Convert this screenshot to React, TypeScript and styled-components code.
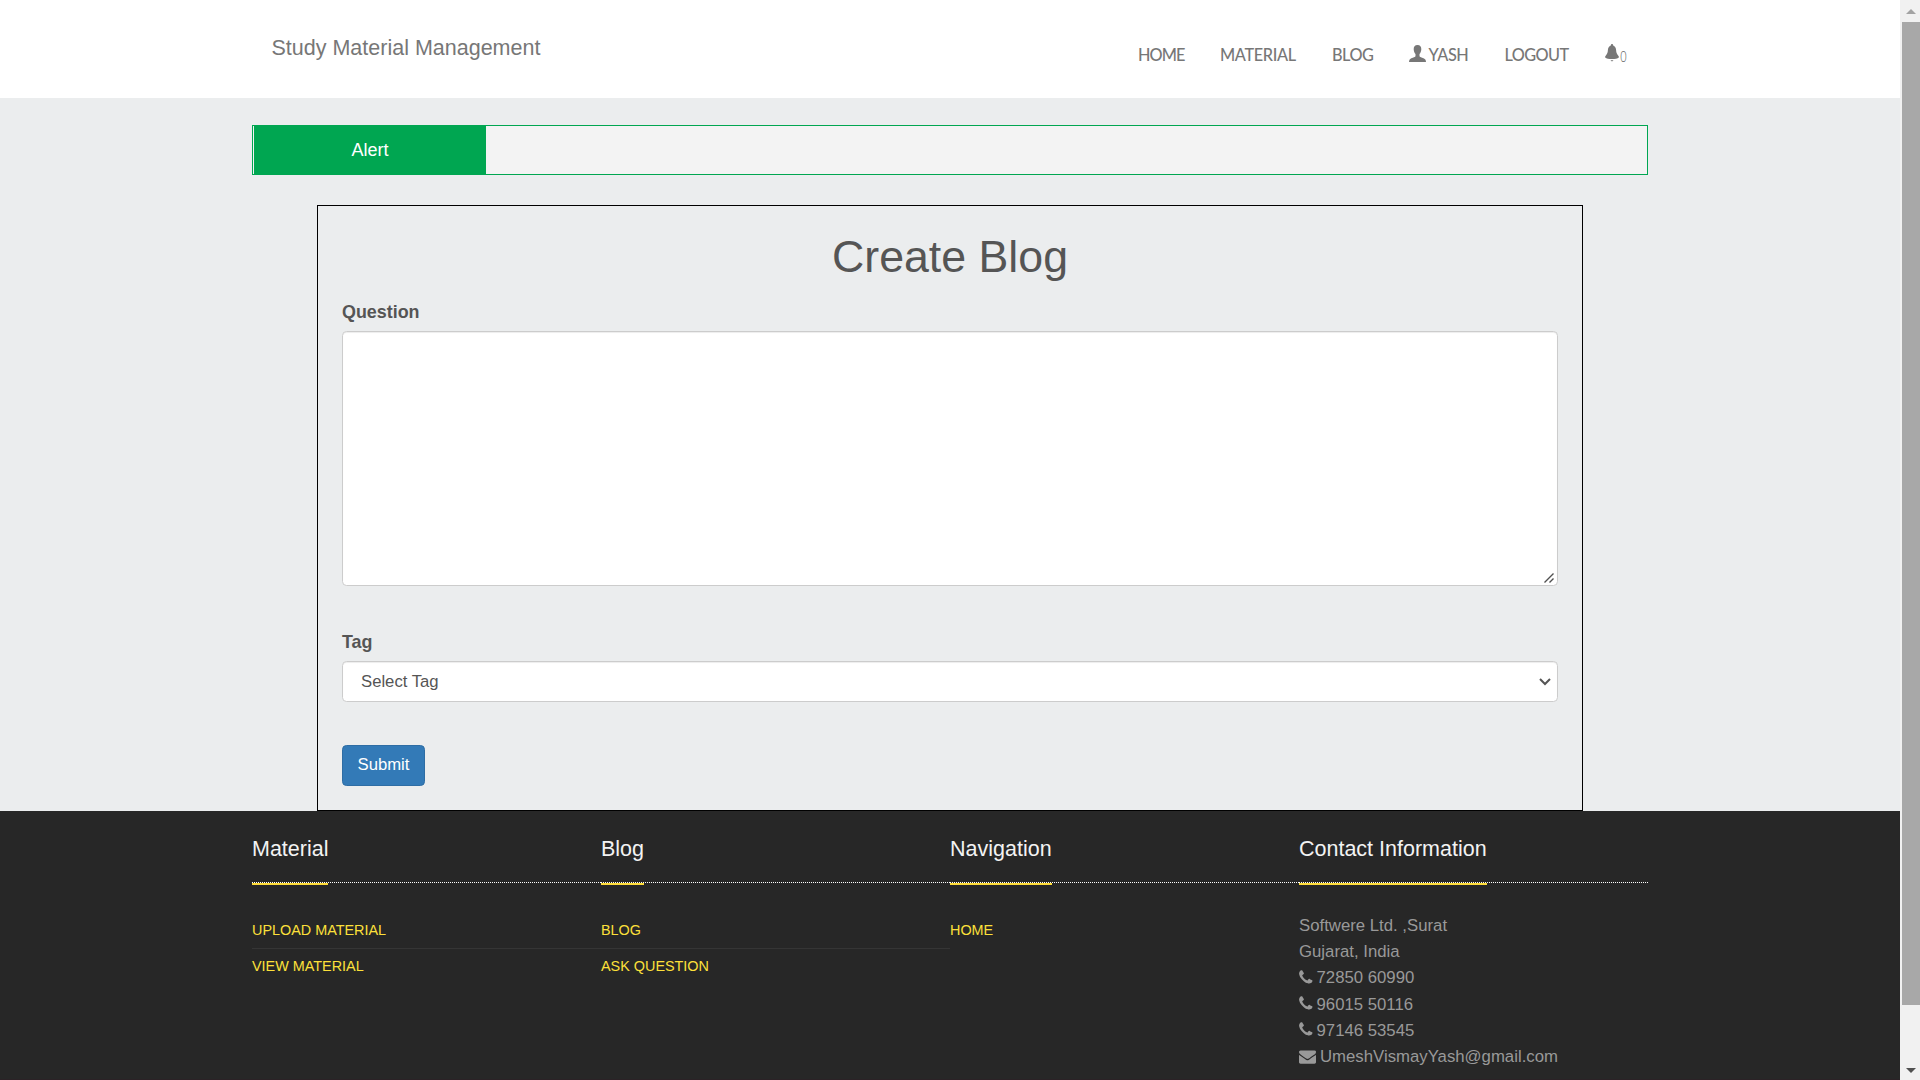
import React from 'react';
import styled, { createGlobalStyle } from 'styled-components';

const Global = createGlobalStyle`
  *, *::before, *::after { box-sizing: border-box; }
  html, body { margin: 0; padding: 0; overflow: hidden; }
  body { font-family: "Liberation Sans", Arial, sans-serif; color: #555; background: #ebedee; }
`;

const Window = styled.div`
  display: flex;
  width: 1920px;
  height: 1080px;
  overflow: hidden;
`;
const Page = styled.div`
  width: 1900px;
  height: 1080px;
  display: flex;
  flex-direction: column;
  background: #ebedee;
  overflow: hidden;
`;
const Header = styled.header`
  flex: none;
  height: 98px;
  padding: 0 272px 0 271.5px;
  background: #fff;
  display: flex;
  justify-content: space-between;
`;
const Brand = styled.a`
  margin-top: 36px;
  font-size: 21.5px;
  line-height: 24px;
  color: #777;
  white-space: nowrap;
`;
const Nav = styled.nav`
  display: flex;
  margin-top: 45px;
  height: 20px;
  gap: 35.5px;
`;
const NavItem = styled.a<{ $w: number; $spacing?: number }>`
  width: ${p => p.$w}px;
  display: flex;
  align-items: center;
  font: 500 16.3px/20px Lato, sans-serif;
  letter-spacing: ${p => p.$spacing ?? 0}px;
  color: #777;
  white-space: nowrap;
  svg { flex: none; fill: #777; }
`;
const UserIcon = styled.svg`
  margin: 0 2.5px 3px 0;
`;
const BellIcon = styled.svg`
  margin-bottom: 4px;
`;
const Count = styled.span`
  font: 300 15px/20px "Open Sans", sans-serif;
  transform: scaleX(.8);
  transform-origin: left;
  margin: 2px 0 0 1px;
  color: #666;
`;
const AlertBar = styled.div`
  flex: none;
  margin: 27px 252px 30px;
  height: 50px;
  border: 1px solid #00a651;
  background: #f3f3f3;
  padding-left: 1px;
`;
const AlertLabel = styled.div`
  width: 232px;
  height: 48px;
  background: #00a651;
  color: #fff;
  font-size: 18px;
  line-height: 48px;
  text-align: center;
`;
const Form = styled.form`
  flex: none;
  width: 1266px;
  height: 606px;
  margin: 0 auto 0 317px;
  border: 1px solid #000;
  padding: 0 24px;
`;
const Title = styled.h1`
  margin: 24px 0 0;
  height: 54px;
  font-size: 44.7px;
  font-weight: 400;
  line-height: 53px;
  text-align: center;
`;
const Label = styled.label<{ $top?: number }>`
  display: block;
  font-size: 17.9px;
  font-weight: 700;
  line-height: 24px;
  margin: ${p => p.$top ?? 16}px 0 7px;
`;
const Field = styled.div`
  position: relative;
`;
const ResizeGrip = styled.svg`
  position: absolute;
  right: 3px;
  bottom: 2px;
  pointer-events: none;
`;
const Chevron = styled.svg`
  position: absolute;
  right: 7px;
  top: 17px;
  pointer-events: none;
`;
const field = `
  display: block;
  width: 1216px;
  border: 1px solid #ccc;
  border-radius: 4.5px;
  background: #fff;
  color: #555;
  box-shadow: inset 0 1px 1px rgba(0,0,0,.075);
  font-family: "Liberation Sans", Arial, sans-serif;
  font-size: 16.7px;
  outline: none;
`;
const TextArea = styled.textarea`
  ${field}
  height: 255px;
  padding: 7px 14px;
  resize: none;
`;
const Select = styled.select`
  ${field}
  height: 41px;
  padding: 0 18px 1px;
  appearance: none;
`;
const Submit = styled.button`
  display: block;
  margin-top: 43px;
  width: 83px;
  height: 41px;
  padding: 0 0 2px;
  border: 1px solid #2e6da4;
  border-radius: 4.5px;
  background: #337ab7;
  color: #fff;
  font-family: "Liberation Sans", Arial, sans-serif;
  font-size: 16.7px;
`;
const Footer = styled.footer`
  flex: 1;
  background: #272727;
  border-bottom: 1px solid #2b2226;
  padding: 0 252px;
  display: grid;
  grid-template-columns: repeat(4, 349px);
`;
const Column = styled.section`
  padding-top: 26px;
`;
const Heading = styled.h4`
  margin: 0;
  height: 46px;
  border-bottom: 1px dotted #fff;
  font-size: 21.5px;
  font-weight: 400;
  line-height: 24px;
  color: #f3f3f3;
  span {
    display: inline-block;
    height: 48px;
    border-bottom: 2px solid #fddb3a;
  }
`;
const Links = styled.ul`
  list-style: none;
  margin: 29px 0 0;
  padding: 0;
`;
const LinkRow = styled.li<{ $line?: boolean }>`
  height: 37px;
  padding-top: 9px;
  border-bottom: 1px solid ${p => (p.$line ? '#353535' : 'transparent')};
  font-size: 14.4px;
  line-height: 19px;
  color: #fde03a;
  & + & { padding-top: 8px; }
`;
const Address = styled.address`
  margin-top: 30px;
  font-style: normal;
  font-size: 16.75px;
  line-height: 26.2px;
  color: #999;
`;
const Line = styled.div<{ $gap?: number }>`
  display: flex;
  align-items: center;
  gap: ${p => p.$gap ?? 0}px;
  height: 26.2px;
  white-space: nowrap;
  svg { flex: none; fill: #999; margin-bottom: 2px; }
`;
const ScrollBar = styled.aside`
  width: 20px;
  height: 1080px;
  background: #f1f1f1;
  display: flex;
  flex-direction: column;
  align-items: center;
`;
const ScrollButton = styled.div<{ $h: number; $pad: number }>`
  height: ${p => p.$h}px;
  padding: ${p => p.$pad}px 0 0 2px;
  line-height: 0;
`;
const Thumb = styled.div`
  width: 18px;
  height: 983px;
  margin-left: 2px;
  background: #a8a8a8;
`;

const Phone = () => (
  <svg width="13.5" height="17" viewBox="0 0 1408 1792">
    <path d="M1408 1240q0 27-10 70.500t-21 68.500q-21 50-122 106-94 51-186 51-27 0-53-3.500t-57.500-12.500-47-14.500-55.500-20.500-49-18q-98-35-175-83-127-79-264-216t-216-264q-48-77-83-175-3-9-18-49t-20.500-55.500-14.500-47-12.500-57.500-3.500-53q0-92 51-186 56-101 106-122 25-11 68.500-21t70.500-10q14 0 21 3 18 6 53 76 11 19 30 54t35 63.500 31 53.500q3 4 17.500 25t21.500 35.500 7 28.500q0 20-28.500 50t-62 55-62 53-28.500 46q0 9 5 22.500t8.500 20.500 14 24 11.500 19q76 137 174 235t235 174q2 1 19 11.500t24 14 20.500 8.500 22.500 5q18 0 46-28.500t53-62 55-62 50-28.500q14 0 28.500 7t35.500 21.500 25 17.500q25 15 53.500 31t63.500 35 54 30q70 35 76 53 3 7 3 21z" />
  </svg>
);
const Mail = () => (
  <svg width="17" height="17" viewBox="0 0 1792 1792">
    <path d="M1792 710v794q0 66-47 113t-113 47h-1472q-66 0-113-47t-47-113v-794q44 49 101 87 362 246 497 345 57 42 92.500 65.500t94.500 48 110 24.500h2q51 0 110-24.500t94.500-48 92.500-65.500q170-123 498-345 57-39 100-87zm0-294q0 79-49 151t-122 123q-376 261-468 325-10 7-42.500 31t-54 38.500-52 32.500-57.500 27-50 9h-2q-23 0-50-9t-57.500-27-52-32.500-54-38.500-42.500-31q-91-64-262-182.500t-205-142.500q-62-42-117-115.500t-55-136.500q0-78 41.500-130t118.500-52h1472q65 0 112.500 47t47.500 113z" />
  </svg>
);

export default function App() {
  return (
    <Window>
      <Global />
      <Page>
        <Header>
          <Brand>Study Material Management</Brand>
          <Nav>
            <NavItem $w={46.5} $spacing={-0.9}>HOME</NavItem>
            <NavItem $w={76.5} $spacing={-0.35}>MATERIAL</NavItem>
            <NavItem $w={41.5} $spacing={-0.5}>BLOG</NavItem>
            <NavItem $w={60} $spacing={-0.4}>
              <UserIcon width="17" height="17" viewBox="0 0 17 17">
                <path d="M8.500 0C5.800 0 4.600 1.800 4.700 4.300C4.800 6.500 5.500 8 6.500 9.100V11.200C6.500 12 1.700 13 .7 14.500C.2 15.200 0 16.100 0 17H17C17 16.100 16.800 15.200 16.300 14.500C15.300 13 10.500 12 10.500 11.200V9.100C11.500 8 12.200 6.500 12.300 4.300C12.400 1.800 11.200 0 8.500 0Z" />
              </UserIcon>
              YASH
            </NavItem>
            <NavItem $w={65} $spacing={-0.6}>LOGOUT</NavItem>
            <NavItem $w={23}>
              <BellIcon width="14" height="18" viewBox="0 0 14 18">
                <path d="M7 0C6.200 0 5.800.6 5.800 1.500C4 2.100 3 3.800 2.900 6C2.800 9 2 10 .7 11.800C.1 12.600 0 13 .2 13.500C1.300 14.700 4 15 7 15S12.700 14.700 13.800 13.500C14 13 13.900 12.600 13.300 11.800C12 10 11.200 9 11.100 6C11 3.800 10 2.100 8.200 1.500C8.200.6 7.800 0 7 0ZM5.700 16.200H8.300C8.300 17.500 5.700 17.500 5.700 16.200Z" />
              </BellIcon>
              <Count>0</Count>
            </NavItem>
          </Nav>
        </Header>
        <AlertBar><AlertLabel>Alert</AlertLabel></AlertBar>
        <Form>
          <Title>Create Blog</Title>
          <Label>Question</Label>
          <Field>
            <TextArea />
            <ResizeGrip width="12" height="12" stroke="#505050" strokeWidth="1.4">
              <path d="M1.500 10.500L10.500 1.500M6.500 10.500L10.500 6.500" />
            </ResizeGrip>
          </Field>
          <Label $top={44}>Tag</Label>
          <Field>
            <Select><option>Select Tag</option></Select>
            <Chevron width="12" height="8" fill="none" stroke="#555" strokeWidth="2">
              <path d="M1 1L6 6L11 1" />
            </Chevron>
          </Field>
          <Submit type="button">Submit</Submit>
        </Form>
        <Footer>
          <Column>
            <Heading><span>Material</span></Heading>
            <Links>
              <LinkRow $line>UPLOAD MATERIAL</LinkRow>
              <LinkRow>VIEW MATERIAL</LinkRow>
            </Links>
          </Column>
          <Column>
            <Heading><span>Blog</span></Heading>
            <Links>
              <LinkRow $line>BLOG</LinkRow>
              <LinkRow>ASK QUESTION</LinkRow>
            </Links>
          </Column>
          <Column>
            <Heading><span>Navigation</span></Heading>
            <Links>
              <LinkRow>HOME</LinkRow>
            </Links>
          </Column>
          <Column>
            <Heading><span>Contact Information</span></Heading>
            <Address>
              <Line>Softwere Ltd. ,Surat</Line>
              <Line>Gujarat, India</Line>
              <Line $gap={4}><Phone />72850 60990</Line>
              <Line $gap={4}><Phone />96015 50116</Line>
              <Line $gap={4}><Phone />97146 53545</Line>
              <Line $gap={4}><Mail />UmeshVismayYash@gmail.com</Line>
            </Address>
          </Column>
        </Footer>
      </Page>
      <ScrollBar>
        <ScrollButton $h={22} $pad={9}>
          <svg width="10" height="5" fill="#a3a3a3"><path d="M5 0L10 5H0Z" /></svg>
        </ScrollButton>
        <Thumb />
        <ScrollButton $h={75} $pad={63}>
          <svg width="10" height="5" fill="#505050"><path d="M0 0H10L5 5Z" /></svg>
        </ScrollButton>
      </ScrollBar>
    </Window>
  );
}
